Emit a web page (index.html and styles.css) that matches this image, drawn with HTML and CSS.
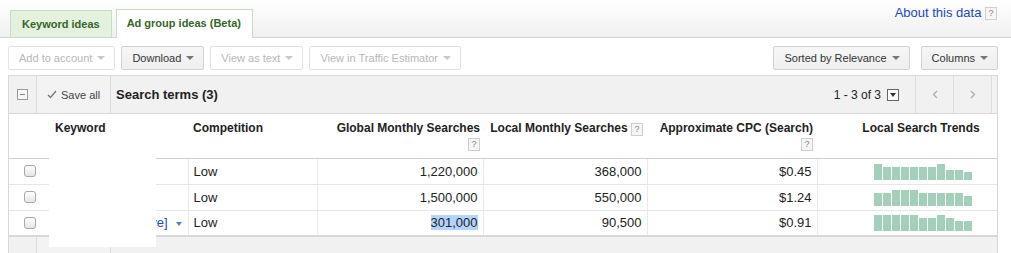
FILE: index.html
```html
<!DOCTYPE html>
<html lang="en">

<head>
    <meta charset="UTF-8">
    <title>Ad group ideas</title>
    <link rel="stylesheet" href="styles.css">
</head>

<body>

    <div class="tabbar">
        <div class="tabs">
            <div class="tab">Keyword ideas</div>
            <div class="tab tab-active">Ad group ideas (Beta)</div>
        </div>
        <div class="about">
            <a href="#">About this data</a>
            <span class="help">?</span>
        </div>
    </div>

    <div class="toolbar">
        <div class="toolbar-group">
            <div class="btn btn-disabled">Add to account <span class="caret"></span></div>
            <div class="btn">Download <span class="caret"></span></div>
            <div class="btn btn-disabled">View as text <span class="caret"></span></div>
            <div class="btn btn-disabled">View in Traffic Estimator <span class="caret"></span></div>
        </div>
        <div class="toolbar-group toolbar-right">
            <div class="btn">Sorted by Relevance <span class="caret"></span></div>
            <div class="btn">Columns <span class="caret"></span></div>
        </div>
    </div>

    <div class="results">
        <div class="results-head">
            <div class="head-select"><span class="minus-box"></span></div>
            <div class="save-all">
                <svg width="10" height="9" viewBox="0 0 10 9"><polyline points="1,5 3.5,7.5 9,1" fill="none" stroke="#777" stroke-width="1.3"/></svg>
                Save all
            </div>
            <div class="results-title">Search terms (3)</div>
            <div class="pager">
                1 - 3 of 3
                <span class="pager-drop"><span class="caret caret-dark"></span></span>
            </div>
            <div class="pager-btn">
                <svg width="6" height="9" viewBox="0 0 6 9"><polyline points="5,1 1.5,4.5 5,8" fill="none" stroke="#aaa" stroke-width="1.2"/></svg>
            </div>
            <div class="pager-btn">
                <svg width="6" height="9" viewBox="0 0 6 9"><polyline points="1,1 4.5,4.5 1,8" fill="none" stroke="#aaa" stroke-width="1.2"/></svg>
            </div>
            <div class="pager-end"></div>
        </div>

        <table class="grid">
            <colgroup>
                <col class="col-check">
                <col class="col-keyword">
                <col class="col-comp">
                <col class="col-global">
                <col class="col-local">
                <col class="col-cpc">
                <col class="col-trend">
            </colgroup>
            <thead>
                <tr>
                    <th></th>
                    <th class="th-keyword">Keyword</th>
                    <th class="th-comp">Competition</th>
                    <th class="num th-global">Global Monthly Searches<br><span class="help">?</span></th>
                    <th class="num">Local Monthly Searches <span class="help">?</span></th>
                    <th class="num">Approximate CPC (Search)<br><span class="help">?</span></th>
                    <th class="trend">Local Search Trends</th>
                </tr>
            </thead>
            <tbody>
                <tr>
                    <td class="check"><span class="checkbox"></span></td>
                    <td class="keyword"></td>
                    <td class="comp">Low</td>
                    <td class="num">1,220,000</td>
                    <td class="num">368,000</td>
                    <td class="num">$0.45</td>
                    <td class="trend">
                        <div class="spark">
                            <span style="height:16px"></span><span style="height:13px"></span><span style="height:13px"></span><span style="height:13px"></span><span style="height:13px"></span><span style="height:13px"></span><span style="height:13px"></span><span style="height:16px"></span><span style="height:10px"></span><span style="height:10px"></span><span style="height:8px"></span>
                        </div>
                    </td>
                </tr>
                <tr>
                    <td class="check"><span class="checkbox"></span></td>
                    <td class="keyword"></td>
                    <td class="comp">Low</td>
                    <td class="num">1,500,000</td>
                    <td class="num">550,000</td>
                    <td class="num">$1.24</td>
                    <td class="trend">
                        <div class="spark">
                            <span style="height:13px"></span><span style="height:13px"></span><span style="height:16px"></span><span style="height:16px"></span><span style="height:16px"></span><span style="height:13px"></span><span style="height:13px"></span><span style="height:13px"></span><span style="height:13px"></span><span style="height:13px"></span><span style="height:10px"></span>
                        </div>
                    </td>
                </tr>
                <tr>
                    <td class="check"><span class="checkbox"></span></td>
                    <td class="keyword"><a href="#">ve]</a><span class="caret caret-blue"></span></td>
                    <td class="comp">Low</td>
                    <td class="num"><span class="selected">301,000</span></td>
                    <td class="num">90,500</td>
                    <td class="num">$0.91</td>
                    <td class="trend">
                        <div class="spark">
                            <span style="height:16px"></span><span style="height:16px"></span><span style="height:16px"></span><span style="height:16px"></span><span style="height:16px"></span><span style="height:13px"></span><span style="height:13px"></span><span style="height:16px"></span><span style="height:13px"></span><span style="height:10px"></span><span style="height:10px"></span>
                        </div>
                    </td>
                </tr>
            </tbody>
        </table>

        <div class="results-foot">
            <div class="head-select"></div>
            <div class="save-all"></div>
        </div>

        <!-- blanked-out keyword column -->
        <div class="redact"></div>
    </div>

</body>

</html>
```

FILE: styles.css
```css
body {
    margin: 0;
    padding: 0;
    font-family: "Liberation Sans", Arial, sans-serif;
    color: #222;
    background: #fff;
}

a {
    color: #2247c0;
    text-decoration: none;
}

/* Tabs */
.tabbar {
    display: flex;
    justify-content: space-between;
    height: 37px;
    padding: 0 14px 0 10px;
    border-bottom: 1px solid #c7dcc4;
    background: linear-gradient(#fff, #f0f0f0);
}

.tabs {
    display: flex;
    align-items: flex-end;
    gap: 4px;
}

.tab {
    height: 26px;
    line-height: 26px;
    padding: 0 11px;
    border: 1px solid #c6dfc0;
    border-bottom: none;
    background: #e4f1de;
    font-size: 11px;
    font-weight: bold;
    color: #36652a;
}

.tab-active {
    position: relative;
    height: 28px;
    line-height: 27px;
    margin-bottom: -1px;
    padding: 0 11px 0 10px;
    background: #fff;
}

.about {
    padding-top: 5px;
    font-size: 13px;
}

.help {
    display: inline-block;
    width: 10px;
    height: 11px;
    line-height: 11px;
    border: 1px solid #cfcfcf;
    background: #f6f6f6;
    color: #888;
    font-size: 9px;
    font-weight: normal;
    text-align: center;
    vertical-align: middle;
}

/* Toolbar */
.toolbar {
    display: flex;
    justify-content: space-between;
    padding: 8px 13px 0 8px;
}

.toolbar-group {
    display: flex;
    gap: 6px;
}

.toolbar-right {
    gap: 11px;
}

.btn {
    display: flex;
    align-items: center;
    gap: 5px;
    height: 22px;
    padding: 0 9px 0 10px;
    border: 1px solid #d2d2d2;
    border-radius: 2px;
    background: linear-gradient(#f6f6f6, #efefef);
    font-size: 11px;
    color: #333;
}

.btn-disabled {
    border-color: #e2e2e2;
    background: #fff;
    color: #b8b8b8;
}

.caret {
    display: inline-block;
    width: 0;
    height: 0;
    border-left: 4px solid transparent;
    border-right: 4px solid transparent;
    border-top: 4px solid #777;
}

.btn-disabled .caret {
    border-top-color: #c8c8c8;
}

.caret-blue {
    border-left-width: 3px;
    border-right-width: 3px;
    border-top: 4px solid #4a86d8;
    margin-left: 8px;
    vertical-align: middle;
}

/* Results block */
.results {
    position: relative;
    margin: 5px 13px 0 8px;
    border: 1px solid #d8d8d8;
    border-bottom: none;
}

.results-head {
    display: flex;
    align-items: center;
    height: 37px;
    border-bottom: 1px solid #d8d8d8;
    background: #f1f1f1;
}

.head-select {
    display: flex;
    align-items: center;
    width: 28px;
    height: 100%;
    padding-left: 8px;
    box-sizing: border-box;
    border-right: 1px solid #dcdcdc;
}

.minus-box {
    position: relative;
    display: inline-block;
    width: 9px;
    height: 9px;
    border: 1px solid #9a9a9a;
    background: #f7f7f7;
}

.minus-box::after {
    content: "";
    position: absolute;
    left: 2px;
    top: 4px;
    width: 5px;
    height: 1px;
    background: #888;
}

.save-all {
    display: flex;
    align-items: center;
    gap: 4px;
    width: 74px;
    height: 100%;
    padding-left: 10px;
    box-sizing: border-box;
    border-right: 1px solid #dcdcdc;
    background: #f3f3f3;
    font-size: 11px;
    color: #444;
}

.results-title {
    flex: 1;
    padding-left: 5px;
    font-size: 13px;
    font-weight: bold;
}

.pager {
    display: flex;
    align-items: center;
    gap: 6px;
    margin-right: 16px;
    font-size: 12px;
}

.pager-drop {
    display: flex;
    align-items: center;
    justify-content: center;
    width: 10px;
    height: 10px;
    border: 1px solid #666;
    background: #fff;
}

.caret-dark {
    border-left-width: 3px;
    border-right-width: 3px;
    border-top: 4px solid #333;
}

.pager-btn {
    display: flex;
    align-items: center;
    justify-content: center;
    width: 37px;
    height: 100%;
    border-left: 1px solid #dedede;
}

.pager-end {
    width: 5px;
    height: 100%;
    border-left: 1px solid #dedede;
}

/* Grid */
.grid {
    width: 100%;
    table-layout: fixed;
    border-collapse: collapse;
    font-size: 13px;
}

.col-check { width: 39px; }
.col-keyword { width: 140px; }
.col-comp { width: 129px; }
.col-global { width: 166px; }
.col-local { width: 164px; }
.col-cpc { width: 170px; }
.col-trend { width: 180px; }

.grid th {
    height: 44px;
    padding: 7px 4px 0 4px;
    box-sizing: border-box;
    vertical-align: top;
    border-bottom: 1px solid #cfcfcf;
    font-size: 12px;
    line-height: 15px;
    text-align: left;
}

.grid th .help {
    margin-top: 1px;
}

.grid th.th-keyword {
    padding-left: 7px;
}

.grid th.th-comp {
    padding-left: 5px;
}

.grid th.th-global {
    padding-right: 3px;
}

.grid th.num {
    text-align: right;
}

.grid th.trend {
    padding-left: 32px;
    text-align: center;
}

.grid td {
    height: 26px;
    padding: 0 5px;
    box-sizing: border-box;
    border-bottom: 1px solid #e6e6e6;
    border-left: 1px solid #ebebeb;
}

.grid tbody tr:last-child td {
    border-bottom: 2px solid #d8d8d8;
}

.grid td.check {
    padding: 0 0 0 15px;
    border-left: none;
}

.grid td.keyword {
    border-left: none;
    padding-right: 6px;
    text-align: right;
}

.checkbox {
    display: block;
    width: 10px;
    height: 10px;
    border: 1px solid #a9a9a9;
    border-radius: 3px;
    background: linear-gradient(#fff, #e6e6e6);
}

.grid td.num {
    padding-right: 5px;
    text-align: right;
}

.selected {
    background: #b3d4fd;
}

.spark {
    display: flex;
    align-items: flex-end;
    justify-content: center;
    gap: 1px;
    height: 16px;
    padding: 0 0 0 32px;
    margin-top: 1px;
}

.spark span {
    width: 8px;
    background: #a4d0bb;
}

.results-foot {
    display: flex;
    height: 24px;
    background: #f1f1f1;
}

.redact {
    position: absolute;
    left: 40px;
    top: 79px;
    width: 107px;
    height: 92px;
    background: #fff;
}
```
